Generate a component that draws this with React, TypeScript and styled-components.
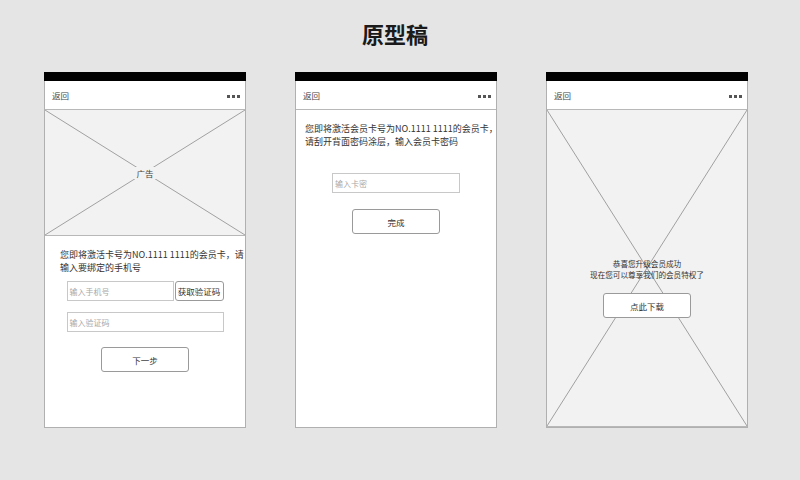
import styled, { createGlobalStyle } from 'styled-components';

const GlobalStyle = createGlobalStyle`
  html, body {
    margin: 0;
    padding: 0;
    background: #e5e5e5;
  }
  body {
    font-family: "Noto Sans CJK SC", "Noto Sans", sans-serif;
    color: #333;
  }
`;

const Page = styled.div`
  width: 800px;
  height: 480px;
  box-sizing: border-box;
  padding-top: 18px;
  display: flex;
  flex-direction: column;
  align-items: center;
`;

const Title = styled.h1`
  margin: 0 0 0 -10px;
  height: 32px;
  line-height: 30px;
  font-size: 22px;
  font-weight: 700;
  color: #1a1a1a;
`;

const Phones = styled.div`
  margin-top: 22px;
  display: flex;
  gap: 49px;
  margin-left: -8px;
`;

const Phone = styled.div`
  width: 202px;
  height: 356px;
  box-sizing: border-box;
  border: 1px solid #b0b0b0;
  background: #fff;
  display: flex;
  flex-direction: column;
`;

const StatusBar = styled.div`
  height: 9px;
  background: #000;
  margin: -1px -1px 0;
`;

const NavBar = styled.div`
  height: 28px;
  border-bottom: 1px solid #b8b8b8;
  display: flex;
  align-items: center;
  justify-content: space-between;
  padding: 0 5px 0 7px;
  font-size: 8.5px;
  color: #444;
`;

const Dots = styled.div`
  display: flex;
  gap: 2px;
  padding-top: 3px;

  span {
    width: 3px;
    height: 3px;
    background: #555;
  }
`;

const Placeholder = styled.div<{ $height?: number }>`
  position: relative;
  height: ${({ $height }) => ($height ? `${$height}px` : 'auto')};
  flex: ${({ $height }) => ($height ? 'none' : '1')};
  background: #f2f2f2;
  border-bottom: 1px solid #b8b8b8;
  display: flex;
  flex-direction: column;
  align-items: center;
`;

const Cross = styled.svg`
  position: absolute;
  inset: 0;
  width: 100%;
  height: 100%;
`;

const PlaceholderLabel = styled.span`
  position: relative;
  margin: auto;
  padding: 0 3px;
  background: #f2f2f2;
  font-size: 8.5px;
  color: #444;
`;

const Body = styled.div<{ $pad: string }>`
  padding: ${({ $pad }) => $pad};
  display: flex;
  flex-direction: column;
`;

const Intro = styled.p<{ $size?: number; $lh?: number; $center?: boolean }>`
  position: relative;
  margin: 0;
  font-size: ${({ $size }) => $size ?? 9}px;
  line-height: ${({ $lh }) => $lh ?? 12.5}px;
  white-space: nowrap;
  color: #333;
  text-align: ${({ $center }) => ($center ? 'center' : 'left')};
`;

const Form = styled.div<{ $width: number; $top: number }>`
  width: ${({ $width }) => $width}px;
  margin: ${({ $top }) => $top}px auto 0;
  display: flex;
  flex-direction: column;
  gap: 11px;
`;

const Row = styled.div`
  display: flex;
  gap: 1px;
`;

const Input = styled.div`
  flex: 1 1 auto;
  height: 20px;
  box-sizing: border-box;
  border: 1px solid #c8c8c8;
  display: flex;
  align-items: center;
  padding-left: 2px;
  font-size: 8px;
  color: #a8a8a8;
`;

const SmallButton = styled.div`
  width: 49px;
  height: 20px;
  box-sizing: border-box;
  border: 1px solid #9a9a9a;
  border-radius: 3px;
  display: flex;
  align-items: center;
  justify-content: center;
  font-size: 8.5px;
  color: #333;
`;

const Button = styled.div<{ $top: number }>`
  position: relative;
  width: 88px;
  height: 25px;
  box-sizing: border-box;
  margin: ${({ $top }) => $top}px auto 0;
  border: 1px solid #9a9a9a;
  border-radius: 3px;
  background: #fff;
  display: flex;
  align-items: center;
  justify-content: center;
  font-size: 8.5px;
  color: #333;
`;

function CrossLines() {
  return (
    <Cross viewBox="0 0 100 100" preserveAspectRatio="none">
      <line x1="0" y1="0" x2="100" y2="100" stroke="#a0a0a0" strokeWidth="1" vectorEffect="non-scaling-stroke" />
      <line x1="100" y1="0" x2="0" y2="100" stroke="#a0a0a0" strokeWidth="1" vectorEffect="non-scaling-stroke" />
    </Cross>
  );
}

function Header() {
  return (
    <>
      <StatusBar />
      <NavBar>
        <span>返回</span>
        <Dots>
          <span />
          <span />
          <span />
        </Dots>
      </NavBar>
    </>
  );
}

export default function App() {
  return (
    <>
      <GlobalStyle />
      <Page>
        <Title>原型稿</Title>
        <Phones>
          <Phone>
            <Header />
            <Placeholder $height={125}>
              <CrossLines />
              <PlaceholderLabel>广告</PlaceholderLabel>
            </Placeholder>
            <Body $pad="13px 0 0 15px">
              <Intro>
                您即将激活卡号为NO.1111 1111的会员卡，请
                <br />
                输入要绑定的手机号
              </Intro>
            </Body>
            <Form $width={157} $top={7}>
              <Row>
                <Input>输入手机号</Input>
                <SmallButton>获取验证码</SmallButton>
              </Row>
              <Input>输入验证码</Input>
            </Form>
            <Button $top={15}>下一步</Button>
          </Phone>

          <Phone>
            <Header />
            <Body $pad="13px 0 0 9px">
              <Intro>
                您即将激活会员卡号为NO.1111 1111的会员卡，
                <br />
                请刮开背面密码涂层，输入会员卡密码
              </Intro>
            </Body>
            <Form $width={128} $top={25}>
              <Input>输入卡密</Input>
            </Form>
            <Button $top={16}>完成</Button>
          </Phone>

          <Phone>
            <Header />
            <Placeholder>
              <CrossLines />
              <Body $pad="149px 0 0 0">
                <Intro $size={7.6} $lh={10.5} $center>
                  恭喜您升级会员成功
                  <br />
                  现在您可以尊享我们的会员特权了
                </Intro>
              </Body>
              <Button $top={13}>点此下载</Button>
            </Placeholder>
          </Phone>
        </Phones>
      </Page>
    </>
  );
}
